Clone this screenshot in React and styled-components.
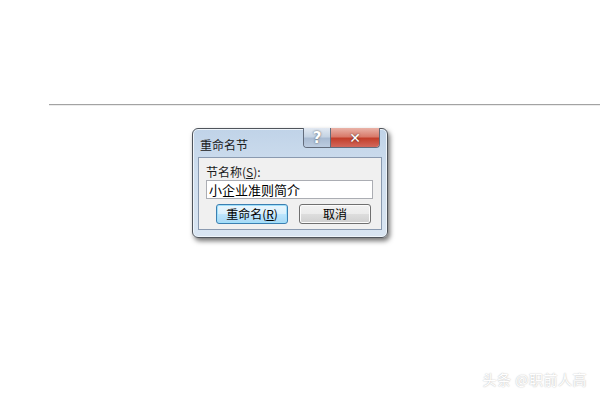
import React from "react";
import styled, { createGlobalStyle } from "styled-components";

const GlobalStyle = createGlobalStyle`
  html, body {
    margin: 0;
    padding: 0;
    background: #ffffff;
  }
  body {
    font-family: "Noto Sans CJK SC", "Noto Sans", sans-serif;
  }
`;

const Page = styled.div`
  position: relative;
  width: 600px;
  height: 400px;
  overflow: hidden;
  background: #ffffff;
  padding-top: 104px;
  box-sizing: border-box;
`;

const Rule = styled.div`
  margin-left: 49px;
  height: 1px;
  background: #a3a3a3;
  border-bottom: 1px solid #ececec;
`;

// window frame (Win7 basic)
const Frame = styled.div`
  margin: 22px 0 0 192px;
  width: 196px;
  height: 110px;
  box-sizing: border-box;
  border: 1px solid #4f545b;
  border-radius: 6px;
  background: linear-gradient(to bottom, #c0d3e8 0%, #cfdeee 40%, #d9e5f2 100%);
  box-shadow: 2px 3px 5px rgba(0, 0, 0, 0.55), inset 0 0 0 1px #eef4fa;
  display: flex;
  flex-direction: column;
`;

const TitleBar = styled.div`
  height: 28px;
  display: flex;
  align-items: flex-start;
  justify-content: space-between;
  padding: 0 7px 0 7px;
`;

const Title = styled.span`
  margin-top: 8px;
  font-size: 12px;
  line-height: 16px;
  color: #1a1a1a;
`;

const Caption = styled.div`
  display: flex;
  margin-top: -1px;
  border: 1px solid #626c7c;
  border-top: none;
  border-radius: 0 0 4px 4px;
  overflow: hidden;
  height: 19px;
`;

const CapButton = styled.div`
  width: ${(p) => p.$w}px;
  display: flex;
  align-items: center;
  justify-content: center;
  font-family: "DejaVu Sans", sans-serif;
  font-weight: bold;
  font-size: ${(p) => (p.$close ? 14 : 15)}px;
  color: #ffffff;
  background: ${(p) =>
    p.$close
      ? "linear-gradient(to bottom, #e9b3a8 0%, #d97b6b 45%, #c33f2b 55%, #d2685c 100%)"
      : "linear-gradient(to bottom, #e2e9f2 0%, #c5d3e3 45%, #a9bbd2 55%, #bccce0 100%)"};
  border-left: ${(p) => (p.$close ? "1px solid #626c7c" : "none")};
  text-shadow: 0 0 2px rgba(40, 40, 40, 0.8);
`;

const Client = styled.div`
  margin: 0 5px 7px 5px;
  flex: 1;
  border: 1px solid #8a9ab0;
  background: #f0f0f0;
  padding: 6px 8px 0 7px;
  display: flex;
  flex-direction: column;
`;

const Label = styled.div`
  font-size: 12px;
  line-height: 15px;
  color: #1a1a1a;
  u {
    text-decoration: underline;
  }
`;

const Input = styled.div`
  margin-top: 1px;
  height: 19px;
  box-sizing: border-box;
  border: 1px solid #abadb3;
  background: #ffffff;
  font-size: 13px;
  line-height: 17px;
  padding-left: 2px;
  color: #000000;
`;

const Buttons = styled.div`
  margin-top: 5px;
  display: flex;
  gap: 11px;
  padding-left: 10px;
`;

const Button = styled.div`
  width: ${(p) => p.$w}px;
  height: 20px;
  box-sizing: border-box;
  border: 1px solid ${(p) => (p.$focus ? "#3c7fb1" : "#707070")};
  border-radius: 3px;
  background: ${(p) =>
    p.$focus
      ? "linear-gradient(to bottom, #eaf6fd 0%, #d9f0fc 50%, #bee6fd 51%, #a7d9f5 100%)"
      : "linear-gradient(to bottom, #f2f2f2 0%, #ebebeb 50%, #dddddd 51%, #cfcfcf 100%)"};
  box-shadow: inset 0 0 0 1px ${(p) => (p.$focus ? "#9fe0fb" : "#fcfcfc")};
  font-size: 12px;
  line-height: 18px;
  text-align: center;
  color: #000000;
`;

const Watermark = styled.div`
  position: absolute;
  right: 13px;
  bottom: 11px;
  font-size: 14px;
  color: #ffffff;
  text-shadow: 0 0 1px #c4c4c4, 0 0 2px #d0d0d0;
  letter-spacing: 0.5px;
`;

export default function App() {
  return (
    <>
      <GlobalStyle />
      <Page>
        <Rule />
        <Frame>
          <TitleBar>
            <Title>重命名节</Title>
            <Caption>
              <CapButton $w={26}>?</CapButton>
              <CapButton $w={48} $close>
                ✕
              </CapButton>
            </Caption>
          </TitleBar>
          <Client>
            <Label>
              节名称(<u>S</u>):
            </Label>
            <Input>小企业准则简介</Input>
            <Buttons>
              <Button $w={72} $focus>
                重命名(<u>R</u>)
              </Button>
              <Button $w={72}>取消</Button>
            </Buttons>
          </Client>
        </Frame>
        <Watermark>头条 @职前人高</Watermark>
      </Page>
    </>
  );
}
